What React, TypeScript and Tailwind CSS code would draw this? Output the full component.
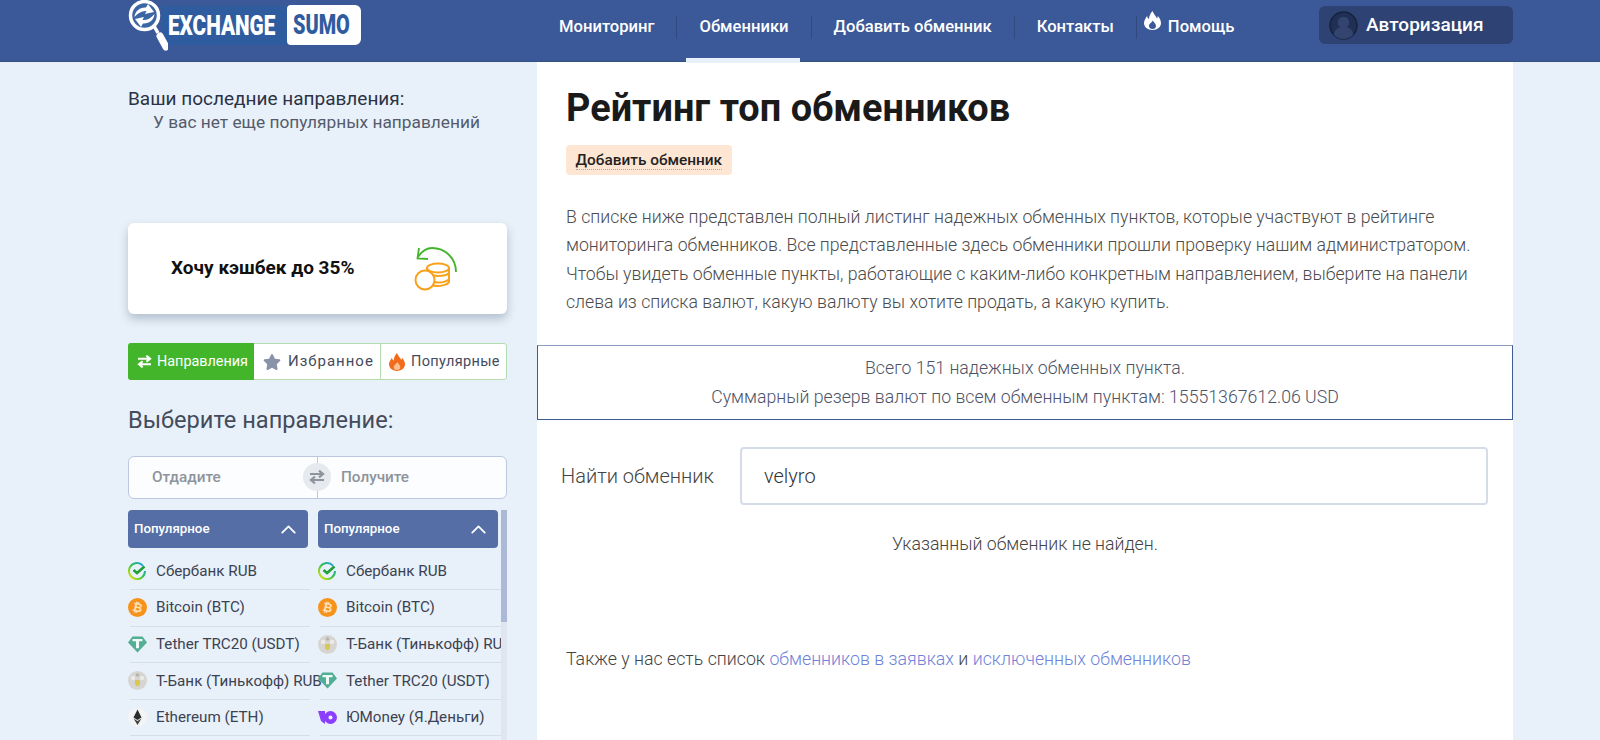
import { ChevronUp } from "lucide-react";
import { FaStar } from "react-icons/fa";

function Flame({ outer, inner, className }: { outer: string; inner: string; className: string }) {
  return (
    <svg viewBox="0 0 17 19" className={className}>
      <path
        d="M8.500 0C9.500 3 12 5 13 7.500 13.500 6.500 13.800 5.800 13.800 5 15.600 7 17 9.500 17 12 17 16 13.500 19 8.500 19 3.500 19 0 16 0 12 0 9 2 7 3 5 3.500 6.500 4 7.500 5 8 5 5 6.500 2 8.500 0Z"
        fill={outer}
      />
      <path d="M8.800 9.500C8 11.500 5 12.500 5 15 5 17 6.500 18 8.500 18 10.500 18 12 17 12 15 12 13 10 11.500 8.800 9.500Z" fill={inner} />
    </svg>
  );
}

function SwapIcon({ className }: { className: string }) {
  return (
    <svg viewBox="0 0 16 14" fill="none" stroke="currentColor" strokeWidth="2.200" className={className}>
      <path d="M1 4h12M10 .7 14 4l-4 3.300" />
      <path d="M15 10H3M6 6.700 2 10l4 3.300" />
    </svg>
  );
}

function Logo() {
  return (
    <div className="flex items-start w-[431px] h-[62px] shrink-0 font-black text-[28px] whitespace-nowrap">
      <svg width="40" height="56" viewBox="0 0 40 56" className="relative z-10 shrink-0">
        <path d="M26 26 30 33" stroke="#fff" strokeWidth="3.500" />
        <path d="M32 36 38 47" stroke="#fff" strokeWidth="7" strokeLinecap="round" />
        <circle cx="16.500" cy="15.500" r="14" fill="#3b65a3" stroke="#fff" strokeWidth="3.500" />
        <path d="M6.500 17C7 11 12 7 18 7.500L20 4 26 12 17 14 18.500 11C14 10.500 10 13 6.500 17Z" fill="#fff" />
        <path d="M6.500 17C7 11 12 7 18 7.500L20 4 26 12 17 14 18.500 11C14 10.500 10 13 6.500 17Z" fill="#fff" transform="rotate(180 16.500 15.500)" />
      </svg>
      <div className="-ml-[6px] mt-[6px] w-[125px] h-[39px] bg-[#2f5c9f] pl-[6px] leading-[39px] text-white">
        <span className="inline-block scale-x-[0.74] origin-left">EXCHANGE</span>
      </div>
      <div className="mt-[5px] w-[74px] h-[40px] bg-white rounded-r-md rounded-l-sm text-[#2f5c9f] leading-[40px] pl-[6px]">
        <span className="inline-block scale-x-[0.71] origin-left">SUMO</span>
      </div>
    </div>
  );
}

function Nav() {
  const sep = <span className="w-px h-[23px] bg-[#30497f] shrink-0" />;
  return (
    <nav className="flex items-center h-[54px] text-white text-[16.600px] font-medium whitespace-nowrap">
      <a className="pr-[22px]">Мониторинг</a>
      {sep}
      <a className="relative mx-[22px]">
        Обменники
        <span className="absolute -left-[13px] -right-[11px] top-[43px] h-[5px] bg-[#e8f1f9]" />
      </a>
      {sep}
      <a className="px-[22px]">Добавить обменник</a>
      {sep}
      <a className="px-[22px]">Контакты</a>
      {sep}
      <a className="flex items-center pl-[7px]">
        <Flame outer="#fff" inner="#3b5998" className="w-[17px] h-[19px] mr-[7px] -mt-[12px]" />
        Помощь
      </a>
    </nav>
  );
}

function Header() {
  return (
    <header className="h-[62px] bg-[#3b5998] border-b border-[#34507f]">
      <div className="w-[1385px] ml-[128px] flex items-start">
        <Logo />
        <Nav />
        <div className="ml-auto mt-[6px] w-[194px] h-[38px] rounded-md bg-[#2e4373] flex items-center pl-[10px] text-white text-[19px] font-medium">
          <svg width="29" height="29" viewBox="0 0 28 28" className="mr-[8px]">
            <circle cx="14" cy="14" r="13" fill="#1f2f55" stroke="#16233f" strokeWidth="1.500" />
            <circle cx="14" cy="11" r="5.500" fill="#33456f" />
            <path d="M4.500 23c1-6 5-7.500 9.500-7.500s8.500 1.500 9.500 7.500a13 13 0 0 1-19 0z" fill="#33456f" />
          </svg>
          Авторизация
        </div>
      </div>
    </header>
  );
}

function CashbackIcon() {
  return (
    <svg width="55" height="55" viewBox="0 0 55 55" fill="none">
      <path d="M51 31C51 17 40 7 27 7 21 7 17 10 13 16" stroke="#43b52b" strokeWidth="1.800" />
      <path d="M14 7 12.500 17.500 23 18" stroke="#43b52b" strokeWidth="1.800" />
      <ellipse cx="33" cy="27" rx="11" ry="4.500" stroke="#f9a11b" strokeWidth="2" />
      <path d="M22 27v15c2 2 6 3 11 3s11-2 11-4.500V27M25 33c2 1 5 2 8 2 5 0 9-1 11-3M30 41c1 .5 2 .5 3 .5 5 0 9-1 11-3.500" stroke="#f9a11b" strokeWidth="2" />
      <circle cx="20" cy="39" r="9.500" fill="#fff" stroke="#f9a11b" strokeWidth="2" />
    </svg>
  );
}

function Tabs() {
  return (
    <div className="mt-[29px] flex h-[37px] rounded-[3px] border border-[#b3dcb0] bg-white text-[#444b5c] whitespace-nowrap">
      <div className="w-[126px] -my-px -ml-px rounded-l-[3px] bg-[#43b52b] text-white text-[14.400px] flex items-center pl-[9px] gap-[5px] shrink-0">
        <SwapIcon className="w-[15px] h-[13px]" />
        Направления
      </div>
      <div className="w-[127px] border-r border-[#b3dcb0] flex items-center pl-[9px] gap-[7px] tracking-[1px] text-[15px] shrink-0">
        <FaStar className="text-[#8893a8] text-[18px]" />
        Избранное
      </div>
      <div className="flex-1 flex items-center pl-[8px] gap-[6px] tracking-[0.35px] text-[14.500px]">
        <Flame outer="#f26a1b" inner="#fcbf8f" className="w-[16px] h-[18px]" />
        Популярные
      </div>
    </div>
  );
}

function Icon({ name }: { name: string }) {
  if (name === "sber") {
    return (
      <svg width="18" height="18" viewBox="0 0 18 18" fill="none">
        <defs>
          <linearGradient id="sb" x1="0" y1="1" x2="1" y2="0">
            <stop offset="0" stopColor="#f5e50f" />
            <stop offset="0.5" stopColor="#37c24b" />
            <stop offset="1" stopColor="#1a9cf0" />
          </linearGradient>
        </defs>
        <path d="M15 3.800A8 8 0 1 0 17 9" stroke="url(#sb)" strokeWidth="2" />
        <path d="M5.500 8 9 11 16.500 4.500" stroke="#21a038" strokeWidth="2.600" />
      </svg>
    );
  }
  if (name === "btc") {
    return (
      <svg width="19" height="19" viewBox="0 0 19 19">
        <circle cx="9.500" cy="9.500" r="9.500" fill="#f7931a" />
        <text x="9.500" y="13.500" textAnchor="middle" fontSize="12" fontWeight="700" fill="#fde2b8" fontFamily="'DejaVu Sans',sans-serif" transform="rotate(12 9.500 9.500)">₿</text>
      </svg>
    );
  }
  if (name === "usdt") {
    return (
      <svg width="19" height="17" viewBox="0 0 19 17">
        <path d="M4.500 .5h10L19 6.500 9.500 16.500 0 6.500z" fill="#52ae94" />
        <path d="M4.500 3h10v2.300h-3.500v7H8v-7H4.500z" fill="#eefaf6" />
      </svg>
    );
  }
  if (name === "tbank") {
    return (
      <svg width="19" height="19" viewBox="0 0 19 19">
        <circle cx="9.500" cy="9.500" r="9.500" fill="#d6d5d2" />
        <circle cx="5" cy="7" r="2.200" fill="#eceae6" />
        <circle cx="14" cy="7" r="2.200" fill="#eceae6" />
        <circle cx="9.500" cy="4" r="1.800" fill="#b4b3ae" />
        <path d="M7 9h5v4.500l-2.500 2-2.500-2z" fill="#dcc653" />
      </svg>
    );
  }
  if (name === "eth") {
    return (
      <svg width="19" height="19" viewBox="0 0 19 19">
        <circle cx="9.500" cy="9.500" r="9.500" fill="#f3f4f5" />
        <path d="M9.500 1.500 13.500 9.500 9.500 12 5.500 9.500z" fill="#2b2b2b" />
        <path d="M5.500 10.500 9.500 13l4-2.500-4 6.500z" fill="#444" />
      </svg>
    );
  }
  return (
    <svg width="19" height="13" viewBox="0 0 19 13">
      <path d="M0 0h7v13L3 10z" fill="#8b3ffd" />
      <circle cx="12.500" cy="6.500" r="6.500" fill="#8b3ffd" />
      <circle cx="12.500" cy="6.500" r="2" fill="#eef4fa" />
    </svg>
  );
}

function CurrencyList({ items, className }: { items: [string, string][]; className: string }) {
  return (
    <div className={className}>
      <div className="h-[38px] w-[180px] rounded-[4px] bg-[#566ea6] text-white text-[13.300px] font-medium flex items-center justify-between pl-[6px] pr-[7px]">
        Популярное
        <ChevronUp size={25} strokeWidth={1.700} />
      </div>
      <div className="mt-[5.400px]">
        {items.map(([name, icon]) => (
          <div key={name} className="h-[36.600px] ml-[2px] flex items-center whitespace-nowrap text-[15.200px] text-[#3c4252] border-b border-[#d5deeb]">
            <span className="w-[26px] -ml-[2px] mr-[2px] flex items-center shrink-0"><Icon name={icon} /></span>
            {name}
          </div>
        ))}
      </div>
    </div>
  );
}

function Sidebar() {
  const giveList: [string, string][] = [
    ["Сбербанк RUB", "sber"],
    ["Bitcoin (BTC)", "btc"],
    ["Tether TRC20 (USDT)", "usdt"],
    ["Т-Банк (Тинькофф) RUB", "tbank"],
    ["Ethereum (ETH)", "eth"],
  ];
  const getList: [string, string][] = [
    ["Сбербанк RUB", "sber"],
    ["Bitcoin (BTC)", "btc"],
    ["Т-Банк (Тинькофф) RUB", "tbank"],
    ["Tether TRC20 (USDT)", "usdt"],
    ["ЮMoney (Я.Деньги)", "yoo"],
  ];
  return (
    <aside className="w-[379px] shrink-0 pt-[25px]">
      <div className="text-[19px] leading-[24px] text-[#2c3246]">Ваши последние направления:</div>
      <div className="text-[17.300px] leading-[23px] pl-[25px] text-[#555b6b]">У вас нет еще популярных направлений</div>
      <div className="mt-[89px] h-[91px] rounded-md bg-white shadow-[0_5px_10px_rgba(60,80,110,0.3)] flex items-center pl-[43px]">
        <span className="text-[19px] font-bold text-[#111] w-[182px] whitespace-nowrap">Хочу кэшбек до 35%</span>
        <span className="ml-[52px]"><CashbackIcon /></span>
      </div>
      <Tabs />
      <div className="mt-[23.500px] text-[23.600px] leading-[32px] text-[#444b5c]">Выберите направление:</div>
      <div className="mt-[20.500px] h-[43px] rounded-md border border-[#bcc8e0] bg-[#fbfdff] flex text-[15.300px] font-medium text-[#8f949c] relative">
        <div className="w-[189px] border-r border-[#bcc8e0] flex items-center pl-[23px]">Отдадите</div>
        <div className="flex-1 flex items-center pl-[23px]">Получите</div>
        <div className="absolute left-[174px] top-[6px] w-[28px] h-[28px] rounded-full bg-[#e6e9ee] flex items-center justify-center text-[#8f949c]">
          <SwapIcon className="w-[16px] h-[16px]" />
        </div>
      </div>
      <div className="mt-[11px] flex h-[230px]">
        <CurrencyList items={giveList} className="w-[190px] pr-[8px] shrink-0" />
        <div className="w-[183px] overflow-hidden shrink-0 relative">
          <CurrencyList items={getList} className="w-full" />
        </div>
        <div className="w-[6px] bg-[#dfe6f0] shrink-0">
          <div className="h-[112px] bg-[#abb8d6]" />
        </div>
      </div>
    </aside>
  );
}

function Main() {
  return (
    <main className="w-[976px] ml-[30px] bg-white h-[678px]">
      <div className="pl-[29px] pt-[23px]">
        <h1 className="text-[37.900px] leading-[46px] font-bold text-[#1a1a1a]">Рейтинг топ обменников</h1>
        <div className="mt-[14px] inline-flex items-center h-[30px] px-[9.500px] rounded-[4px] bg-[#fde6d3] text-[15.400px] font-medium text-[#222]">
          <span className="border-b border-dotted border-[#aaa] leading-[18px]">Добавить обменник</span>
        </div>
        <p className="mt-[27.800px] text-[17.700px] leading-[28.400px] text-[#4c4c4c] font-light w-[930px]">
          В списке ниже представлен полный листинг надежных обменных пунктов, которые участвуют в рейтинге мониторинга обменников. Все представленные здесь обменники прошли проверку нашим администратором. Чтобы увидеть обменные пункты, работающие с каким-либо конкретным направлением, выберите на панели слева из списка валют, какую валюту вы хотите продать, а какую купить.
        </p>
      </div>
      <div className="mt-[28.600px] h-[75px] border border-[#3f5a94] border-t-[#8c9cc0] flex flex-col items-center justify-center text-[17.700px] leading-[28.500px] text-[#4d5468] font-light">
        <div>Всего 151 надежных обменных пункта.</div>
        <div>Суммарный резерв валют по всем обменным пунктам: 15551367612.06 USD</div>
      </div>
      <div className="mt-[27px] flex items-center pl-[24px] pr-[25px]">
        <label className="w-[179px] shrink-0 text-[20px] text-[#444] font-light">Найти обменник</label>
        <input
          readOnly
          value="velyro"
          className="flex-1 h-[58px] rounded-[4px] border-2 border-[#d5dce8] pl-[22px] text-[20px] font-light text-[#333] outline-none"
        />
      </div>
      <div className="mt-[27px] text-center text-[17.700px] leading-[24px] text-[#444] font-light">Указанный обменник не найден.</div>
      <div className="mt-[91px] pl-[29px] text-[17.750px] leading-[24px] text-[#444] font-light">
        Также у нас есть список <a className="text-[#6f83d8]">обменников в заявках</a> и{" "}
        <a className="text-[#6f83d8]">исключенных обменников</a>
      </div>
    </main>
  );
}

export default function App() {
  return (
    <div className="w-[1600px] h-[740px] overflow-hidden bg-[#e8f1f9] font-['Roboto',sans-serif]">
      <Header />
      <div className="w-[1385px] ml-[128px] flex">
        <Sidebar />
        <Main />
      </div>
    </div>
  );
}
